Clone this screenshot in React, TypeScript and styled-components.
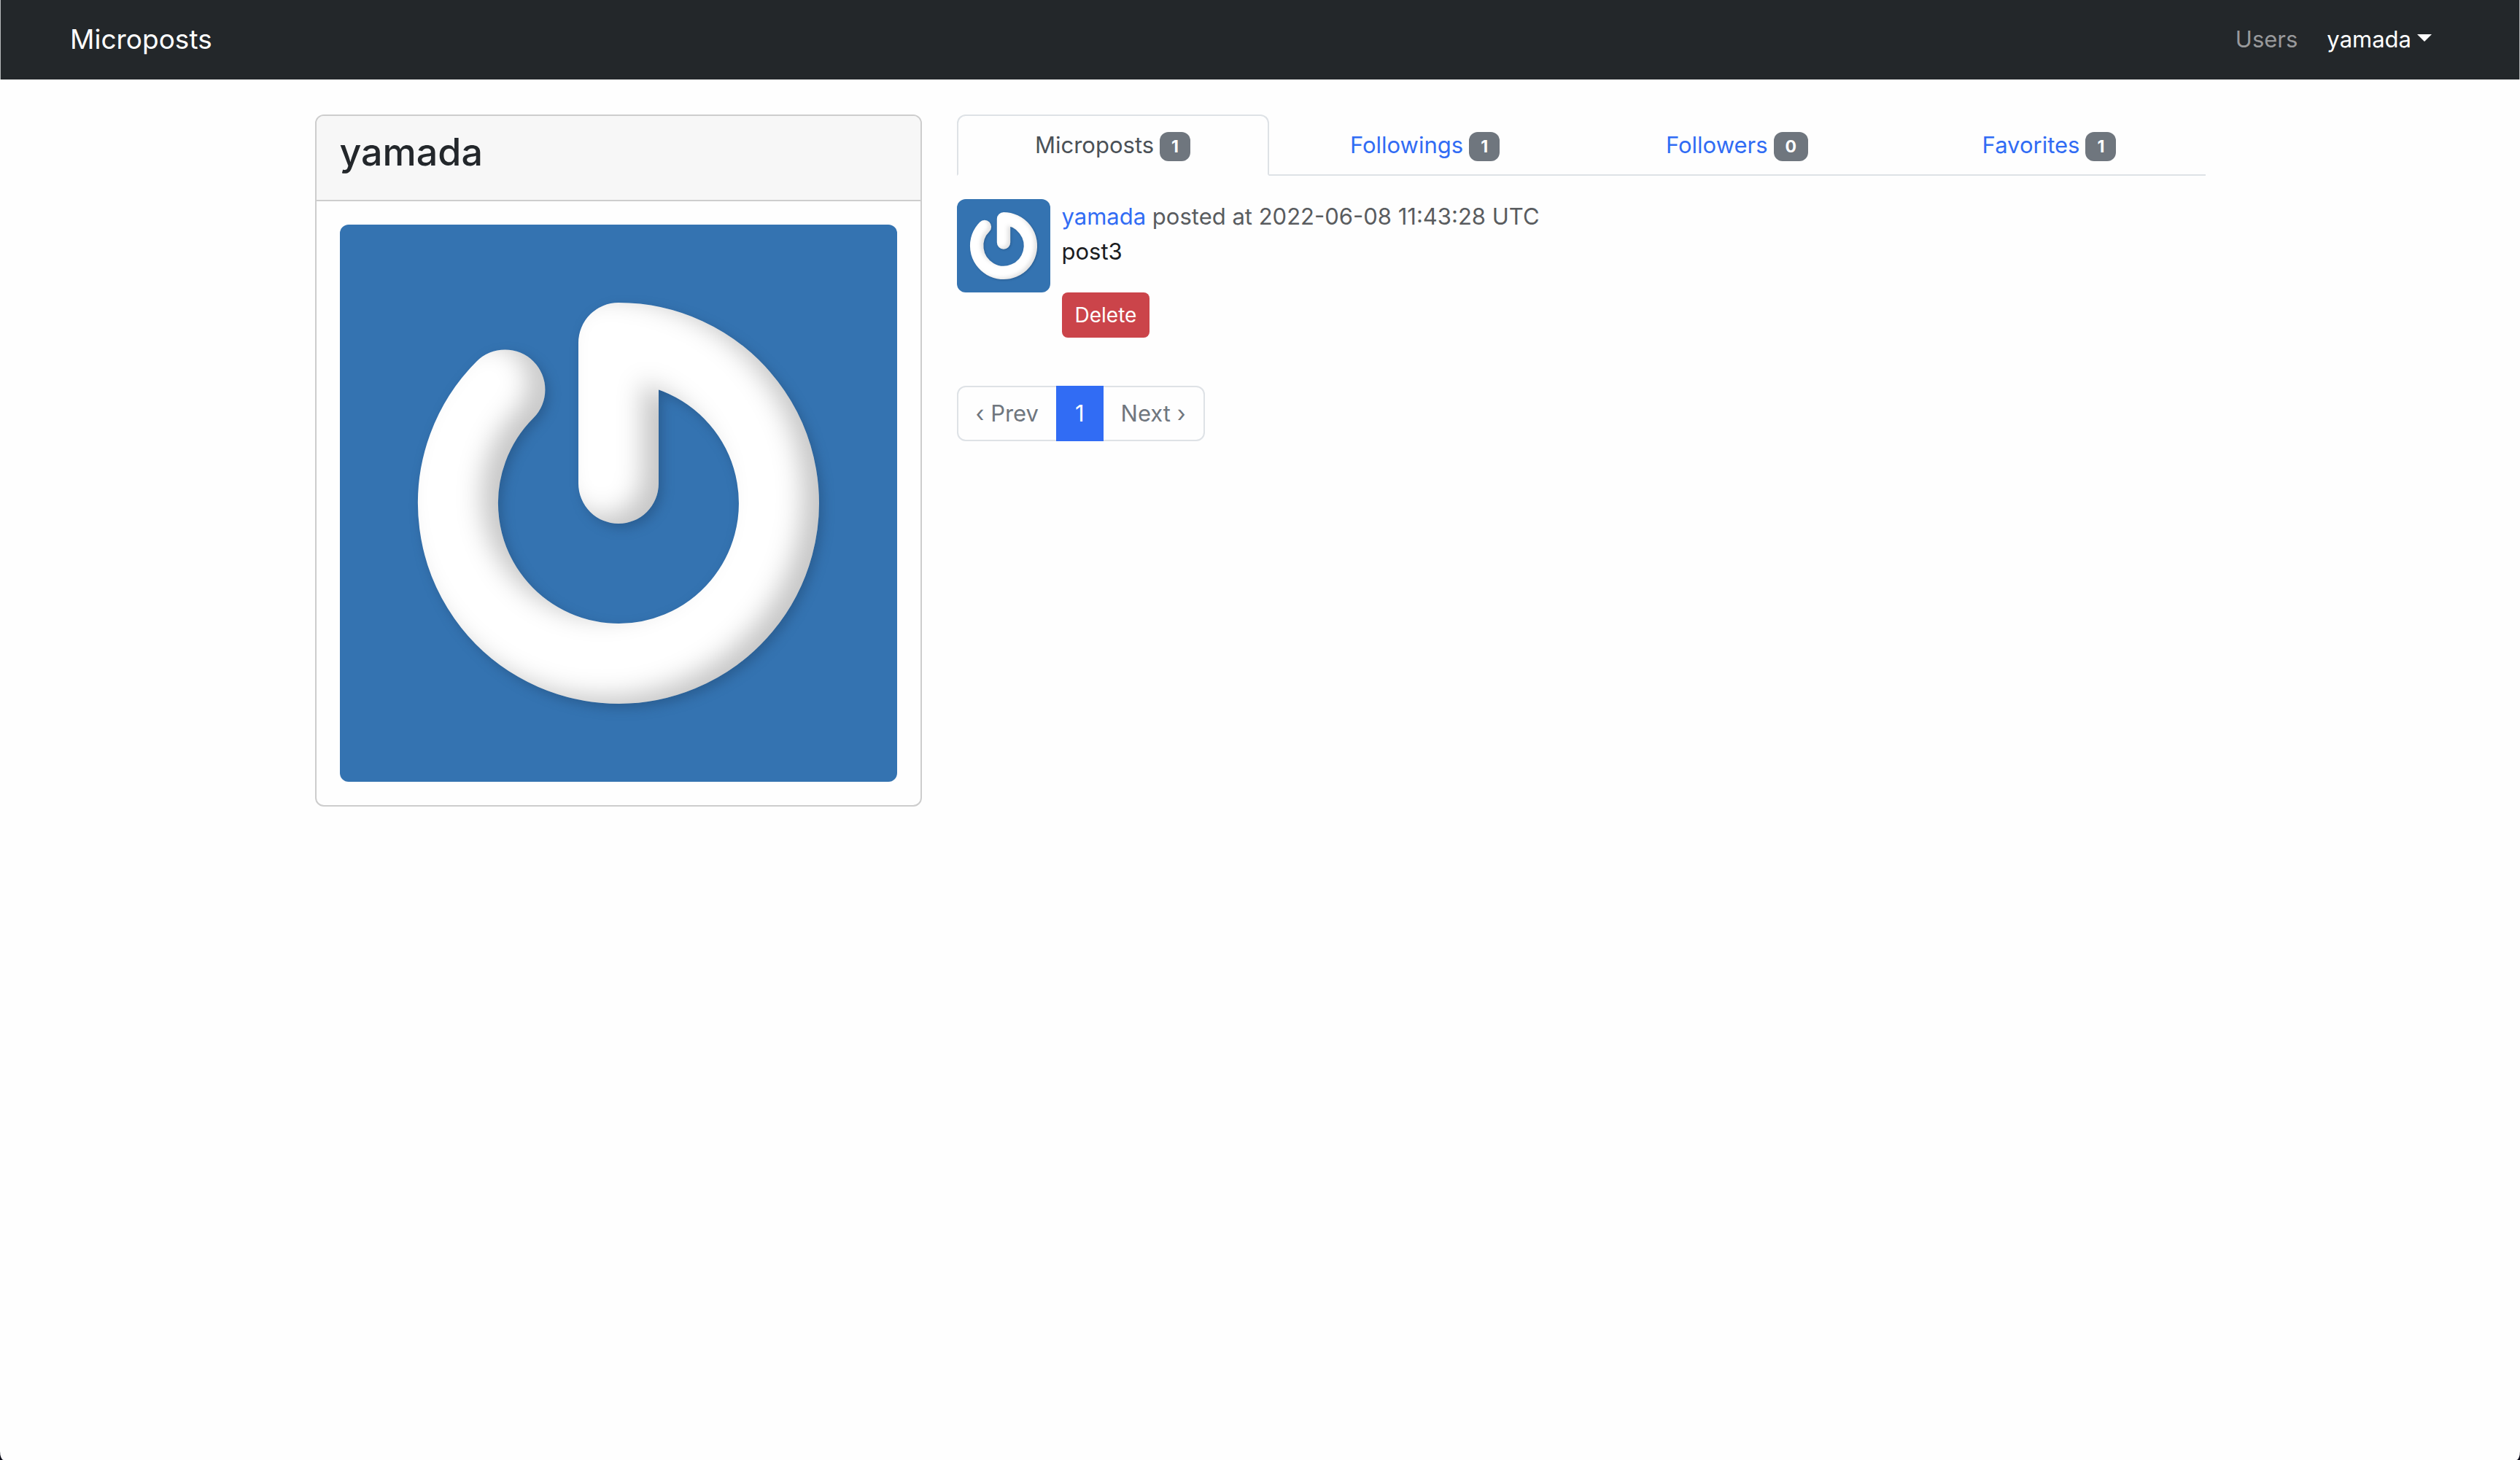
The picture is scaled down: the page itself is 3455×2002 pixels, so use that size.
import React, { useId } from 'react';
import styled, { createGlobalStyle } from 'styled-components';

const color = {
  navbar: '#23272a',
  text: '#23272b',
  muted: '#6f767e',
  soft: '#595c5f',
  primary: '#316cf4',
  danger: '#cb444a',
  border: '#dee2e6',
  cardBorder: '#cdcdcd',
  avatar: '#3473b1',
};

const GlobalStyle = createGlobalStyle`
  *, *::before, *::after { box-sizing: border-box; }
  body {
    margin: 0;
    background: #0b0b18;
    color: ${color.text};
    font-family: Inter, "Liberation Sans", sans-serif;
    font-size: 31px;
    line-height: 48px;
  }
  ul { list-style: none; margin: 0; padding: 0; }
  p { margin: 0; }
  button { font-family: inherit; cursor: pointer; }
`;

const Page = styled.div`
  min-height: 100vh;
  background: #fefefe;
  border-radius: 0 0 5px 5px / 0 0 12px 12px;
`;

const Header = styled.header`
  display: flex;
  align-items: center;
  justify-content: space-between;
  height: 109px;
  padding: 0 104px 2px 95px;
  background: ${color.navbar};
  border: solid #b9bbbd;
  border-width: 0 1px;
`;

const Brand = styled.a`
  color: #fff;
  font-size: 37px;
  line-height: 60px;
  text-decoration: none;
`;

const NavList = styled.ul`
  display: flex;
  align-items: center;
  gap: 8px;
`;

const NavLink = styled.a`
  display: block;
  padding: 16px;
  color: #98999b;
  text-decoration: none;
`;

const UserMenu = styled.button`
  display: flex;
  align-items: center;
  gap: 8px;
  padding: 16px;
  border: 0;
  background: none;
  color: #fff;
  font-size: 31px;
  line-height: 48px;

  &::after {
    content: '';
    margin-bottom: 4px;
    border: 10px solid transparent;
    border-top-color: #fff;
    border-bottom: 0;
  }
`;

const Container = styled.main`
  display: grid;
  grid-template-columns: repeat(12, 1fr);
  align-items: start;
  gap: 48px;
  max-width: 2640px;
  margin: 48px auto 0;
  padding: 0 24px;
`;

const Card = styled.section`
  grid-column: span 4;
  border: 2px solid ${color.cardBorder};
  border-radius: 12px;
  overflow: hidden;
`;

const CardHeader = styled.div`
  padding: 16px 32px 32px;
  background: #f7f7f7;
  border-bottom: 2px solid ${color.cardBorder};
`;

const CardTitle = styled.h3`
  margin: 0;
  font-size: 52px;
  font-weight: 500;
  line-height: 67px;
`;

const CardBody = styled.div`
  padding: 32px;
`;

const AvatarImage = styled.svg`
  display: block;
  width: 100%;
  aspect-ratio: 1;
  border-radius: 12px;
  background: ${color.avatar};
`;

const Content = styled.section`
  grid-column: span 8;
`;

const Tabs = styled.ul`
  display: grid;
  grid-template-columns: repeat(4, 1fr);
  box-shadow: inset 0 -2px ${color.border};
`;

const Tab = styled.a<{ $active: boolean }>`
  display: flex;
  align-items: center;
  justify-content: center;
  gap: 8px;
  padding: 16px 32px;
  border: 2px solid transparent;
  border-radius: 12px 12px 0 0;
  color: ${color.primary};
  text-decoration: none;
  ${({ $active }) =>
    $active &&
    `
    color: #4b5157;
    background: #fefefe;
    border-color: ${color.border} ${color.border} #fefefe;
  `}
`;

const Badge = styled.span`
  margin-top: 4px;
  padding: 8px 16px;
  border-radius: 12px;
  background: ${color.muted};
  color: #fff;
  font-size: 23px;
  font-weight: 700;
  line-height: 24px;
`;

const PostItem = styled.li`
  display: flex;
  gap: 16px;
  margin: 32px 0 66px;
`;

const Thumb = styled.div`
  flex: none;
  width: 128px;
`;

const PostMeta = styled.p`
  color: ${color.soft};
`;

const AuthorLink = styled.a`
  color: ${color.primary};
  text-decoration: none;
`;

const PostText = styled.p`
  margin-bottom: 32px;
  color: #1a1c1f;
`;

const DeleteButton = styled.button`
  display: block;
  padding: 10px 18px;
  border: 0;
  border-radius: 8px;
  background: ${color.danger};
  color: #fff;
  font-size: 28px;
  line-height: 42px;
`;

const Pagination = styled.ul`
  display: flex;
`;

const PageItem = styled.li`
  & + & { margin-left: -2px; }
  &:first-child > a { border-radius: 12px 0 0 12px; }
  &:last-child > a { border-radius: 0 12px 12px 0; }
`;

const PageLink = styled.a<{ $active?: boolean }>`
  position: relative;
  z-index: ${({ $active }) => ($active ? 1 : 0)};
  display: block;
  padding: 12px 24px;
  border: 2px solid ${({ $active }) => ($active ? color.primary : color.border)};
  background: ${({ $active }) => ($active ? color.primary : '#fefefe')};
  color: ${({ $active }) => ($active ? '#fff' : color.muted)};
  text-decoration: none;
`;

function Avatar({ depth = 1 }: { depth?: number }) {
  const id = useId();
  return (
    <AvatarImage viewBox="0 0 764 764" role="img" aria-label="yamada">
      <defs>
        <filter id={id} x="0" y="0" width="764" height="764" filterUnits="userSpaceOnUse" colorInterpolationFilters="sRGB">
          <feGaussianBlur in="SourceAlpha" stdDeviation="8" result="dropBlur" />
          <feOffset in="dropBlur" dx="5" dy="6" result="dropShape" />
          <feFlood floodColor="#1b3f63" floodOpacity="0.4" />
          <feComposite in2="dropShape" operator="in" result="drop" />
          <feOffset in="SourceAlpha" dx="-23" dy="-10" result="moved" />
          <feGaussianBlur in="moved" stdDeviation="17" result="inner" />
          <feFlood floodColor="#000" floodOpacity={0.22 * depth} result="shade" />
          <feComposite in="shade" in2="inner" operator="out" result="outside" />
          <feComposite in="outside" in2="SourceAlpha" operator="in" result="bevel" />
          <feMerge>
            <feMergeNode in="drop" />
            <feMergeNode in="SourceGraphic" />
            <feMergeNode in="bevel" />
          </feMerge>
        </filter>
      </defs>
      <path
        d="M382 355V162A220 220 0 1 1 226.4 226.4"
        fill="none"
        stroke="#fff"
        strokeWidth="110"
        strokeLinecap="round"
        strokeLinejoin="round"
        filter={`url(#${id})`}
      />
    </AvatarImage>
  );
}

const tabs = [
  { label: 'Microposts', count: 1 },
  { label: 'Followings', count: 1 },
  { label: 'Followers', count: 0 },
  { label: 'Favorites', count: 1 },
];

export default function App() {
  return (
    <Page>
      <GlobalStyle />
      <Header>
        <Brand href="#">Microposts</Brand>
        <nav>
          <NavList>
            <li><NavLink href="#users">Users</NavLink></li>
            <li><UserMenu type="button" aria-haspopup="true">yamada</UserMenu></li>
          </NavList>
        </nav>
      </Header>
      <Container>
        <Card>
          <CardHeader><CardTitle>yamada</CardTitle></CardHeader>
          <CardBody><Avatar /></CardBody>
        </Card>
        <Content>
          <Tabs>
            {tabs.map((tab, i) => (
              <li key={tab.label}>
                <Tab href={`#${tab.label.toLowerCase()}`} $active={i === 0}>
                  {tab.label}
                  <Badge>{tab.count}</Badge>
                </Tab>
              </li>
            ))}
          </Tabs>
          <ul>
            <PostItem>
              <Thumb><Avatar depth={0.5} /></Thumb>
              <div>
                <PostMeta>
                  <AuthorLink href="#yamada">yamada</AuthorLink> posted at 2022-06-08 11:43:28 UTC
                </PostMeta>
                <PostText>post3</PostText>
                <DeleteButton type="button">Delete</DeleteButton>
              </div>
            </PostItem>
          </ul>
          <nav aria-label="Pages">
            <Pagination>
              <PageItem><PageLink href="#prev">‹ Prev</PageLink></PageItem>
              <PageItem><PageLink href="#1" $active aria-current="page">1</PageLink></PageItem>
              <PageItem><PageLink href="#next">Next ›</PageLink></PageItem>
            </Pagination>
          </nav>
        </Content>
      </Container>
    </Page>
  );
}
